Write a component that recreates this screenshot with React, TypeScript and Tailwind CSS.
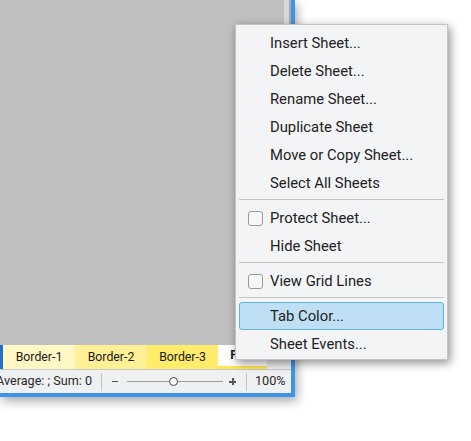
import React from 'react';

type MenuEntry =
  | { kind: 'item'; label: string; check?: boolean; active?: boolean }
  | { kind: 'sep' };

const menu: MenuEntry[] = [
  { kind: 'item', label: 'Insert Sheet...' },
  { kind: 'item', label: 'Delete Sheet...' },
  { kind: 'item', label: 'Rename Sheet...' },
  { kind: 'item', label: 'Duplicate Sheet' },
  { kind: 'item', label: 'Move or Copy Sheet...' },
  { kind: 'item', label: 'Select All Sheets' },
  { kind: 'sep' },
  { kind: 'item', label: 'Protect Sheet...', check: true },
  { kind: 'item', label: 'Hide Sheet' },
  { kind: 'sep' },
  { kind: 'item', label: 'View Grid Lines', check: true },
  { kind: 'sep' },
  { kind: 'item', label: 'Tab Color...', active: true },
  { kind: 'item', label: 'Sheet Events...' },
];

const tabs = [
  { label: 'Border-1', w: 'w-[72px]', bg: 'bg-[#fff7c4]' },
  { label: 'Border-2', w: 'w-[72px]', bg: 'bg-[#fff095]' },
  { label: 'Border-3', w: 'w-[71px]', bg: 'bg-[#ffec6a]' },
];

export default function App() {
  return (
    <div
      className="relative w-[471px] h-[441px] overflow-hidden bg-white"
      style={{ fontFamily: 'Roboto, "Liberation Sans", sans-serif' }}
    >
      {/* spreadsheet window */}
      <div className="flex flex-col w-[295px] h-[397px] border-r-4 border-b-4 border-[#3f93e8] shadow-[2px_4px_10px_rgba(0,0,0,0.35)]">
        <div className="flex flex-1">
          <div className="flex-1 bg-[#c0c0c0]" />
          <div className="w-[5px] bg-[#d8d8d8]" />
          <div className="w-[2px] bg-[#a9a9a9]" />
        </div>

        {/* sheet tabs */}
        <div className="flex h-[24px] bg-[#eceef0] text-[12.3px] text-[#1a1a1a]">
          <div className="w-[3px] bg-[#1e6fcf]" />
          {tabs.map((t) => (
            <div key={t.label} className={`${t.w} ${t.bg} flex items-center justify-center`}>
              {t.label}
            </div>
          ))}
          <div className="w-[49px] bg-white border-b-[3px] border-[#ffe64d] flex items-center justify-center font-bold">
            Font
          </div>
        </div>
        <div className="h-px bg-[#c9c9c9]" />

        {/* status bar */}
        <div className="flex items-center h-[23px] bg-[#eef0f2] text-[12.6px] text-[#2a2a2a]">
          <div className="w-[101px] flex justify-end pr-[9px] whitespace-nowrap">Average: ; Sum: 0</div>
          <div className="w-px h-[18px] bg-[#c4c4c4]" />
          <div className="ml-[10px] w-[6px] h-[1.5px] bg-[#555]" />
          <div className="relative ml-[9px] w-[96px] h-[9px] flex items-center">
            <div className="w-full h-px bg-[#9b9b9b]" />
            <div className="absolute left-[42px] top-0 w-[9px] h-[9px] rounded-full border border-[#444] bg-white" />
          </div>
          <div className="relative ml-[6px] w-[7px] h-[7px]">
            <div className="absolute left-0 top-[3px] w-[7px] h-[1.5px] bg-[#555]" />
            <div className="absolute left-[3px] top-0 w-[1.5px] h-[7px] bg-[#555]" />
          </div>
          <div className="ml-[10px] w-px h-[18px] bg-[#c4c4c4]" />
          <div className="ml-[8px]">100%</div>
        </div>
      </div>

      {/* context menu */}
      <div className="absolute left-[235px] top-[24px] w-[213px] pt-[4px] pb-[1px] bg-[#f3f4f6] border border-[#c4c4c4] shadow-[2px_3px_9px_rgba(0,0,0,0.45)] text-[14.8px] text-[#222]">
        {menu.map((m, i) =>
          m.kind === 'sep' ? (
            <div key={i} className="mx-[3px] mt-[2px] mb-[4px] h-px bg-[#c4c4c4]" />
          ) : (
            <div
              key={i}
              className={`mx-[3px] h-[28px] flex items-center pl-[8px] rounded-[3px] border ${
                m.active ? 'bg-[#bfe0f4] border-[#62b2e6]' : 'border-transparent'
              }`}
            >
              <div className="w-[15px] h-[15px] flex-shrink-0">
                {m.check && <div className="w-[15px] h-[15px] rounded-[3px] border border-[#9a9a9a] bg-[#f7f7f7]" />}
              </div>
              <span className="ml-[7px] whitespace-nowrap">{m.label}</span>
            </div>
          )
        )}
      </div>
    </div>
  );
}
